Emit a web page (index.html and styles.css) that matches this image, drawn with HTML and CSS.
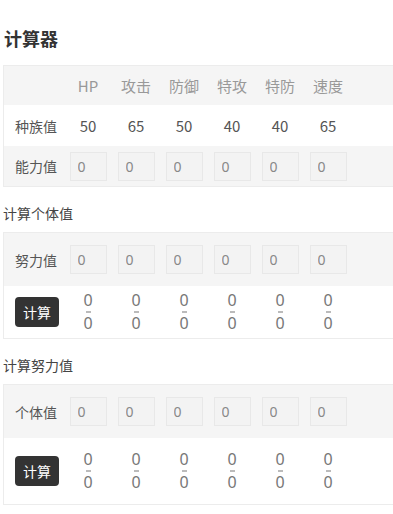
FILE: index.html
```html
<!DOCTYPE html>
<html lang="zh">

<head>
    <meta charset="UTF-8">
    <meta name="viewport" content="width=device-width, initial-scale=1.0">
    <title>计算器</title>
    <link rel="stylesheet" href="styles.css">
</head>

<body>
    <main class="page">
        <h1 class="title">计算器</h1>

        <div class="card">
            <div class="row head">
                <span></span>
                <span>HP</span>
                <span>攻击</span>
                <span>防御</span>
                <span>特攻</span>
                <span>特防</span>
                <span>速度</span>
            </div>
            <div class="row base">
                <span class="label">种族值</span>
                <span>50</span>
                <span>65</span>
                <span>50</span>
                <span>40</span>
                <span>40</span>
                <span>65</span>
            </div>
            <div class="row grey">
                <span class="label">能力值</span>
                <input class="num" type="text" value="0">
                <input class="num" type="text" value="0">
                <input class="num" type="text" value="0">
                <input class="num" type="text" value="0">
                <input class="num" type="text" value="0">
                <input class="num" type="text" value="0">
            </div>
        </div>

        <h2 class="sub">计算个体值</h2>
        <div class="card">
            <div class="row grey tall">
                <span class="label">努力值</span>
                <input class="num" type="text" value="0">
                <input class="num" type="text" value="0">
                <input class="num" type="text" value="0">
                <input class="num" type="text" value="0">
                <input class="num" type="text" value="0">
                <input class="num" type="text" value="0">
            </div>
            <div class="row tall">
                <button class="calc">计算</button>
                <div class="range"><span>0</span><i></i><span>0</span></div>
                <div class="range"><span>0</span><i></i><span>0</span></div>
                <div class="range"><span>0</span><i></i><span>0</span></div>
                <div class="range"><span>0</span><i></i><span>0</span></div>
                <div class="range"><span>0</span><i></i><span>0</span></div>
                <div class="range"><span>0</span><i></i><span>0</span></div>
            </div>
        </div>

        <h2 class="sub">计算努力值</h2>
        <div class="card">
            <div class="row grey tall">
                <span class="label">个体值</span>
                <input class="num" type="text" value="0">
                <input class="num" type="text" value="0">
                <input class="num" type="text" value="0">
                <input class="num" type="text" value="0">
                <input class="num" type="text" value="0">
                <input class="num" type="text" value="0">
            </div>
            <div class="row taller">
                <button class="calc">计算</button>
                <div class="range"><span>0</span><i></i><span>0</span></div>
                <div class="range"><span>0</span><i></i><span>0</span></div>
                <div class="range"><span>0</span><i></i><span>0</span></div>
                <div class="range"><span>0</span><i></i><span>0</span></div>
                <div class="range"><span>0</span><i></i><span>0</span></div>
                <div class="range"><span>0</span><i></i><span>0</span></div>
            </div>
        </div>
    </main>
</body>

</html>
```

FILE: styles.css
```css
* {
    margin: 0;
    padding: 0;
    box-sizing: border-box;
}

html,
body {
    overflow: hidden;
}

body {
    background-color: #fff;
    font-family: "Noto Sans CJK SC", "Noto Sans", sans-serif;
    color: #555;
}

.page {
    padding-left: 3px;
}

.title {
    padding: 26px 0 0 1px;
    font-size: 18px;
    line-height: 24px;
    font-weight: bold;
    color: #333;
}

/* card runs off the right side, so no right border */
.card {
    width: 390px;
    margin-top: 15px;
    border: 1px solid #ececec;
    border-right: none;
}

.sub {
    margin-top: 16px;
    font-size: 14px;
    line-height: 20px;
    font-weight: normal;
    color: #444;
}

.sub + .card {
    margin-top: 9px;
}

.row {
    display: grid;
    grid-template-columns: 49px repeat(6, 48px);
    align-items: center;
    justify-items: center;
    padding-left: 11px;
    height: 40px;
    font-size: 15px;
}

.head {
    height: 39px;
    background-color: #f5f5f5;
    color: #999;
}

.base {
    height: 41px;
}

.grey {
    background-color: #f5f5f5;
}

.tall {
    height: 52px;
}

.taller {
    height: 66px;
}

.card .tall:first-child {
    height: 53px;
}

.label {
    justify-self: start;
    font-size: 14px;
    color: #555;
}

.num {
    width: 37px;
    height: 29px;
    padding-left: 7px;
    border: 1px solid #e8e8e8;
    background-color: #f3f3f3;
    font-family: "Noto Sans", sans-serif;
    font-size: 14px;
    color: #888;
    outline: none;
}

.calc {
    justify-self: start;
    width: 44px;
    height: 30px;
    border: none;
    border-radius: 4px;
    background-color: #333;
    color: #fff;
    font-family: "Noto Sans CJK SC", sans-serif;
    font-size: 14px;
}

.range {
    display: flex;
    flex-direction: column;
    align-items: center;
    font-family: "Noto Sans", sans-serif;
    font-size: 16px;
    line-height: 13px;
    color: #777;
}

.range i {
    display: block;
    width: 5px;
    height: 2px;
    margin: 4px 0;
    background-color: #bbb;
}
```
